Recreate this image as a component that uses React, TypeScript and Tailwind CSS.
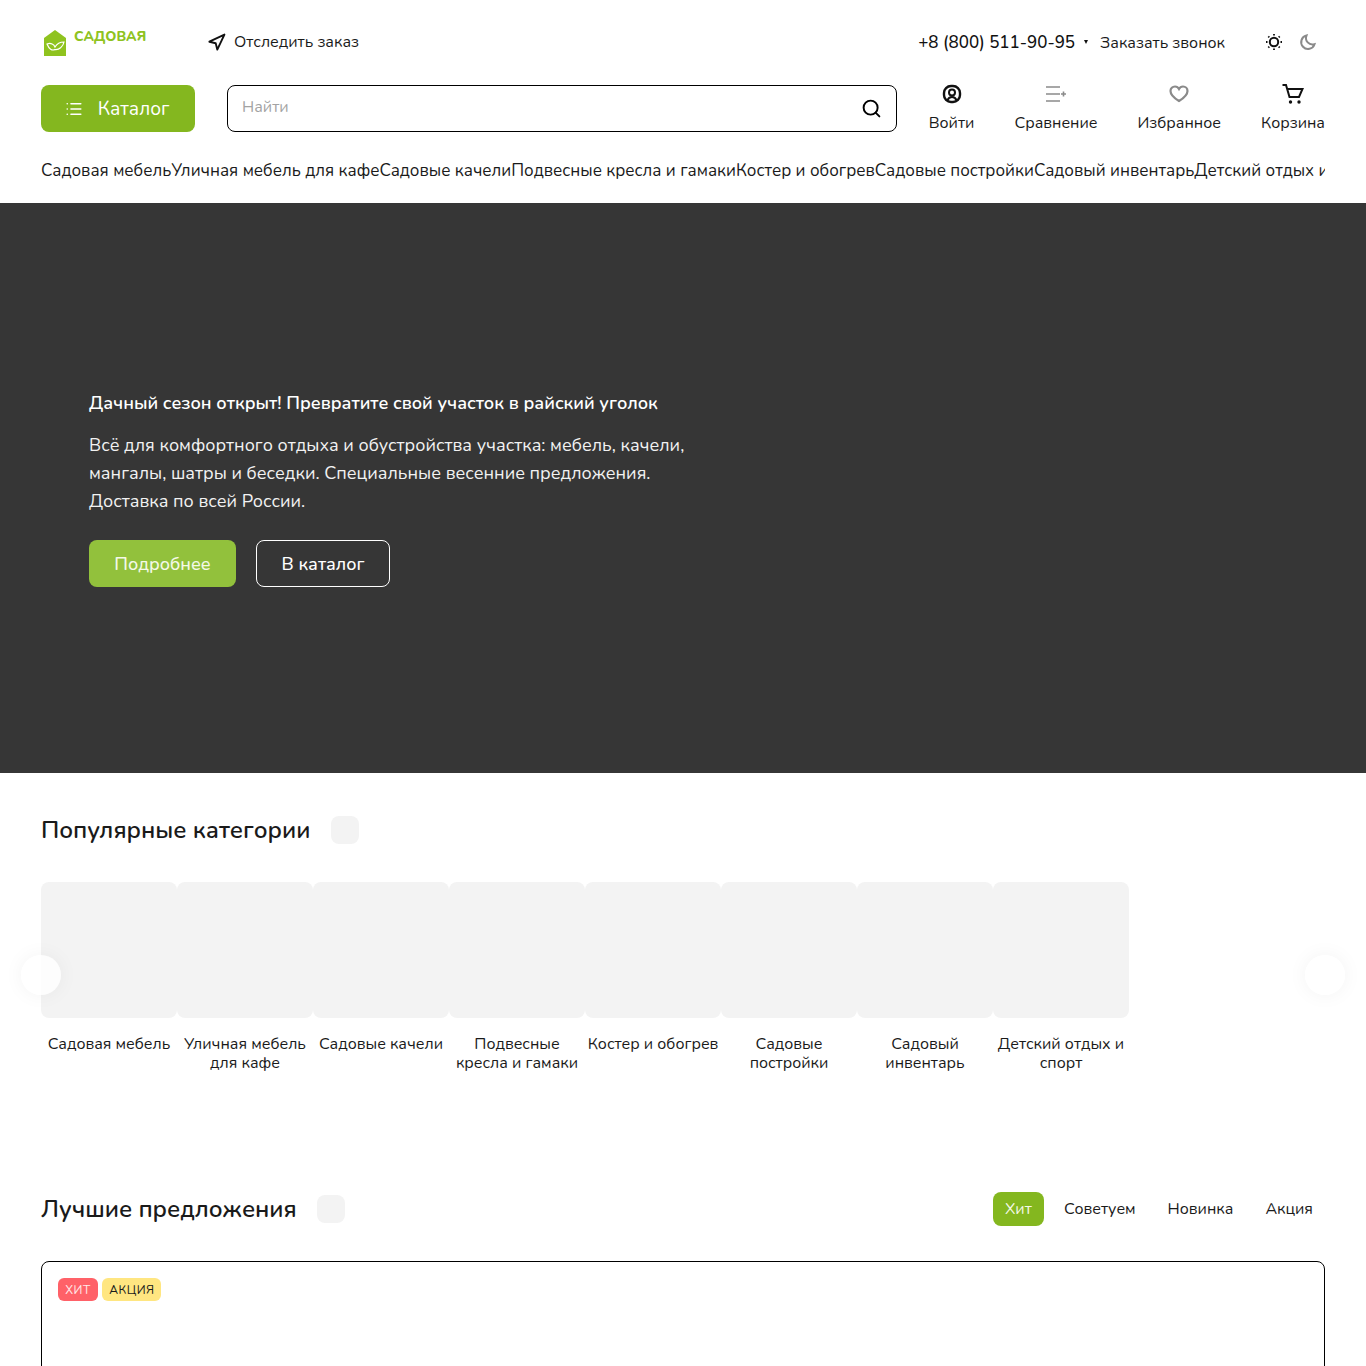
import { Search, List, Navigation } from "lucide-react";

const FONT = "font-['Nunito','Noto_Sans','Open_Sans',sans-serif]";

const categories = [
  "Садовая мебель",
  "Уличная мебель для кафе",
  "Садовые качели",
  "Подвесные кресла и гамаки",
  "Костер и обогрев",
  "Садовые постройки",
  "Садовый инвентарь",
  "Детский отдых и спорт",
];

function Logo() {
  return (
    <div className="flex w-[166px] items-start">
      <svg width="24" height="27" viewBox="0 0 24 27" className="mt-[2px] ml-[2px]">
        <path d="M12 0 L23 8 V26 H1 V8 Z" fill="#8fc31f" />
        <path d="M4 14 C8 12.500 11 14.500 12 17 C14 13.500 17 12 21 12 C20 17 16 20 12 19.500 C9 21 6 19 4 14 Z" fill="none" stroke="#fff" strokeWidth="1.200" />
      </svg>
      <span className="mt-[1px] ml-[7px] text-[14px] leading-[16px] font-extrabold text-[#8fc31f]">САДОВАЯ</span>
    </div>
  );
}

function UserIcon() {
  return (
    <svg width="22" height="22" viewBox="0 0 22 22" fill="none" stroke="#111" strokeWidth="2.400">
      <rect x="3" y="3" width="16" height="16" rx="7" />
      <circle cx="11" cy="9.500" r="3" strokeWidth="2" />
      <path d="M6.500 17.500c.8-2.500 2.300-3.500 4.500-3.500s3.700 1 4.500 3.500" strokeWidth="2" />
    </svg>
  );
}

function CompareIcon() {
  return (
    <svg width="22" height="22" viewBox="0 0 22 22" fill="none" stroke="#8a8a8a" strokeWidth="1.600">
      <path d="M1 4h14M1 11h14M1 18h14M16 11h5M18.500 8.500v5" />
    </svg>
  );
}

function HeartIcon() {
  return (
    <svg width="22" height="22" viewBox="0 0 22 22" fill="none" stroke="#8a8a8a" strokeWidth="2.200">
      <path d="M11 18C6 15 2.500 12 2.500 8C2.500 5.500 4.500 3.500 7 3.500c1.700 0 3.200 .9 4 2.400C11.800 4.400 13.300 3.500 15 3.500 17.500 3.500 19.500 5.500 19.500 8 19.500 12 16 15 11 18Z" />
    </svg>
  );
}

function CartIcon() {
  return (
    <svg width="22" height="22" viewBox="0 0 22 22" fill="none" stroke="#111" strokeWidth="2">
      <path d="M0.500 2h3.500l3.500 12h9.500l3.500-8H5.500" />
      <circle cx="8.500" cy="19" r="1.700" fill="#111" stroke="none" />
      <circle cx="17" cy="19" r="1.700" fill="#111" stroke="none" />
    </svg>
  );
}

function SunIcon() {
  return (
    <svg width="18" height="18" viewBox="0 0 18 18" fill="none" stroke="#111" strokeWidth="2">
      <circle cx="9" cy="9" r="4.200" />
      <path strokeWidth="1.800" d="M9 1v1.500M9 15.500V17M1 9h1.500M15.500 9H17M3.300 3.300l1 1M13.700 13.700l1 1M3.300 14.700l1-1M13.700 4.300l1-1" />
    </svg>
  );
}

function MoonIcon() {
  return (
    <svg width="18" height="18" viewBox="0 0 18 18" fill="none" stroke="#8a8a8a" strokeWidth="2">
      <path d="M7.500 2.500a6.800 6.800 0 1 0 8 8.700A6.500 6.500 0 0 1 7.500 2.500Z" />
    </svg>
  );
}

function HeaderAction({ icon, label }: { icon: React.ReactNode; label: string }) {
  return (
    <div className="-mt-[2px] flex flex-col items-center">
      <div className="flex h-[22px] items-center">{icon}</div>
      <span className="mt-[6px] text-[16px] leading-[24px] text-[#1a1a1a]">{label}</span>
    </div>
  );
}

function Header() {
  return (
    <header className="h-[203px] bg-white px-[41px]">
      <div className="flex h-[85px] items-center pb-[1px]">
        <Logo />
        <Navigation size={19} strokeWidth={2.400} className="text-[#111]" />
        <span className="ml-[8px] text-[16px] text-[#1a1a1a]">Отследить заказ</span>
        <div className="ml-auto flex items-center pr-[8px]">
          <span className="mt-[1px] text-[17px] font-medium text-[#111]">+8 (800) 511-90-95</span>
          <span className="mb-[1px] ml-[9px] h-0 w-0 border-x-[2.500px] border-t-[4px] border-x-transparent border-t-[#111]" />
          <span className="mt-[1px] ml-[12px] text-[16px] text-[#1a1a1a]">Заказать звонок</span>
          <div className="ml-[40px] flex items-center gap-[16px]">
            <SunIcon />
            <MoonIcon />
          </div>
        </div>
      </div>
      <div className="flex h-[47px] items-stretch">
        <button className="flex w-[154px] items-center justify-center gap-[15px] rounded-[8px] bg-[#84b71f] pt-[1px] pr-[2px] text-[19.200px] text-white">
          <List size={18} strokeWidth={2.200} />
          Каталог
        </button>
        <div className="ml-[32px] flex w-[670px] items-center justify-between rounded-[8px] border border-black pr-[14px] pl-[14px]">
          <span className="mb-[3px] text-[16px] text-[#a3a3a3]">Найти</span>
          <Search size={21} strokeWidth={2.200} className="text-black" />
        </div>
        <div className="ml-auto flex gap-[40px]">
          <HeaderAction icon={<UserIcon />} label="Войти" />
          <HeaderAction icon={<CompareIcon />} label="Сравнение" />
          <HeaderAction icon={<HeartIcon />} label="Избранное" />
          <HeaderAction icon={<CartIcon />} label="Корзина" />
        </div>
      </div>
      <nav className="mt-[27px] flex overflow-hidden text-[17px] leading-[24px] whitespace-nowrap text-[#1a1a1a]">
        {categories.map((link) => (
          <a key={link} className="shrink-0">{link}</a>
        ))}
      </nav>
    </header>
  );
}

function Hero() {
  return (
    <section className="flex h-[570px] flex-col justify-center bg-[#363636] pl-[89px] text-white">
      <h2 className="text-[18px] leading-[28px] font-semibold">
        Дачный сезон открыт! Превратите свой участок в райский уголок
      </h2>
      <p className="mt-[14px] w-[620px] text-[18px] leading-[28px] text-[#f2f2f2]">
        Всё для комфортного отдыха и обустройства участка: мебель, качели, мангалы, шатры и беседки. Специальные весенние предложения. Доставка по всей России.
      </p>
      <div className="mt-[25px] flex gap-[20px]">
        <button className="h-[47px] w-[147px] rounded-[8px] bg-[#92c13c] pt-[1px] text-[18px] font-medium text-[#f4f9e8]">Подробнее</button>
        <button className="h-[47px] w-[134px] rounded-[8px] border border-white pt-[1px] text-[18px] font-medium">В каталог</button>
      </div>
    </section>
  );
}

function Categories() {
  return (
    <section className="relative h-[388px] px-[41px] pt-[43px]">
      <div className="flex items-center gap-[21px]">
        <h2 className="text-[24px] leading-[28px] font-semibold text-[#1a1a1a]">Популярные категории</h2>
        <span className="h-[28px] w-[28px] rounded-[8px] bg-[#f3f3f3]" />
      </div>
      <div className="mt-[38px] flex">
        {categories.map((name) => (
          <div key={name} className="w-[136px] shrink-0">
            <div className="h-[136px] rounded-[8px] bg-[#f3f3f3]" />
            <p className="mt-[17px] px-[2px] text-center text-[16px] leading-[19px] text-[#1a1a1a]">{name}</p>
          </div>
        ))}
      </div>
      <span className="absolute top-[182px] left-[21px] h-[40px] w-[40px] rounded-full bg-white/80 shadow-[0_0_20px_rgba(0,0,0,0.05)]" />
      <span className="absolute top-[182px] right-[21px] h-[40px] w-[40px] rounded-full bg-white/80 shadow-[0_0_20px_rgba(0,0,0,0.05)]" />
    </section>
  );
}

function Offers() {
  return (
    <section className="px-[41px] pt-[31px]">
      <div className="flex h-[34px] items-center">
        <h2 className="text-[24px] leading-[28px] font-semibold text-[#1a1a1a]">Лучшие предложения</h2>
        <span className="ml-[20px] h-[28px] w-[28px] rounded-[8px] bg-[#f3f3f3]" />
        <div className="ml-auto flex items-center pr-[12px] text-[16px] text-[#1a1a1a]">
          <span className="flex h-[34px] w-[51px] items-center justify-center rounded-[8px] bg-[#84b71f] text-[#f4f9e8]">Хит</span>
          <span className="ml-[20px]">Советуем</span>
          <span className="ml-[32px]">Новинка</span>
          <span className="ml-[32px]">Акция</span>
        </div>
      </div>
      <div className="mt-[35px] h-[300px] rounded-[8px] border border-black p-[16px]">
        <div className="flex gap-[4px] text-[12px] tracking-[0.5px]">
          <span className="flex h-[23px] w-[40px] items-center justify-center rounded-[6px] bg-[#ff6168] text-[#ffe9e9]">ХИТ</span>
          <span className="flex h-[23px] w-[59px] items-center justify-center rounded-[6px] bg-[#ffe681] pl-[1px] text-[#1a1a1a]">АКЦИЯ</span>
        </div>
      </div>
    </section>
  );
}

export default function App() {
  return (
    <div className={`h-[1366px] overflow-hidden bg-white ${FONT}`}>
      <Header />
      <Hero />
      <Categories />
      <Offers />
    </div>
  );
}
